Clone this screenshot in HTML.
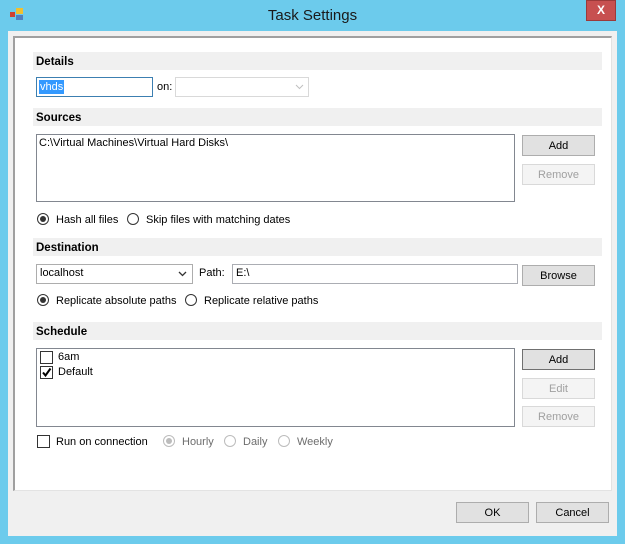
<!DOCTYPE html>
<html><head><style>
*{box-sizing:border-box;margin:0;padding:0}
body{width:625px;height:544px;background:#6ccbec;font-family:"Liberation Sans",sans-serif;font-size:11px;color:#000;position:relative;overflow:hidden}
.a{position:absolute}
.hdr{position:absolute;left:33px;width:569px;height:18px;background:#f0f0f0;font-weight:bold;font-size:11.5px;padding:4px 0 0 3px}
.btn{position:absolute;width:73px;height:21px;background:#e1e1e1;border:1px solid #adadad;text-align:center;line-height:20px}
.dis{background:#f4f4f4;border-color:#d9d9d9;color:#a0a0a0}
.box{position:absolute;background:#fff;border:1px solid #828790}
.rad{position:absolute;width:12px;height:12px;border:1px solid #333;border-radius:50%;background:#fff}
.rad.on::after{content:"";position:absolute;left:2px;top:2px;width:6px;height:6px;border-radius:50%;background:#333}
.rad.dr{border-color:#bcbcbc}
.rad.dr.on::after{background:#bcbcbc}
.chk{position:absolute;width:13px;height:13px;border:1px solid #333;background:#fff}
.t{position:absolute;white-space:nowrap}
</style></head><body>
<div class="a" style="left:10px;top:8px;width:14px;height:12px">
<div class="a" style="left:6px;top:0;width:7px;height:6px;background:#f0c030"></div>
<div class="a" style="left:0;top:4px;width:5px;height:5px;background:#d04030"></div>
<div class="a" style="left:6px;top:7px;width:7px;height:5px;background:#5080c0"></div>
</div>
<div class="t" style="left:0;width:625px;text-align:center;top:7px;font-size:15px;color:#1a1a1a">Task Settings</div>
<div class="a" style="left:586px;top:0;width:30px;height:21px;background:#c75050;border:1px solid #9b3a3a;color:#fff;font-weight:bold;font-size:12px;text-align:center;line-height:19px">X</div>
<div class="a" style="left:8px;top:31px;width:609px;height:505px;background:#f0f0f0"></div>
<div class="a" style="left:13px;top:36px;width:599px;height:455px;background:#fff;border-top:2px solid #a0a0a0;border-left:2px solid #a0a0a0;border-right:1px solid #e3e3e3;border-bottom:1px solid #e3e3e3"></div>

<div class="hdr" style="top:52px">Details</div>
<div class="box" style="left:36px;top:77px;width:117px;height:20px;border-color:#3c7fb1"></div>
<div class="t" style="left:39px;top:80px;background:#3399ff;color:#fff;padding:0 1px;line-height:14px">vhds</div>
<div class="t" style="left:157px;top:81px">on:</div>
<div class="box" style="left:175px;top:77px;width:134px;height:20px;border-color:#d9d9d9"></div>
<svg class="a" style="left:295px;top:84px" width="9" height="6"><path d="M1 1 L4.5 4.5 L8 1" stroke="#c0c0c0" fill="none"/></svg>

<div class="hdr" style="top:108px">Sources</div>
<div class="box" style="left:36px;top:134px;width:479px;height:68px"></div>
<div class="t" style="left:39px;top:137px">C:\Virtual Machines\Virtual Hard Disks\</div>
<div class="btn" style="left:522px;top:135px">Add</div>
<div class="btn dis" style="left:522px;top:164px">Remove</div>
<div class="rad on" style="left:37px;top:213px"></div><div class="t" style="left:56px;top:214px">Hash all files</div>
<div class="rad" style="left:127px;top:213px"></div><div class="t" style="left:146px;top:214px">Skip files with matching dates</div>

<div class="hdr" style="top:238px">Destination</div>
<div class="box" style="left:36px;top:264px;width:157px;height:20px;border-color:#adadad;background:#fff"></div>
<div class="t" style="left:40px;top:267px">localhost</div>
<svg class="a" style="left:178px;top:271px" width="9" height="6"><path d="M1 1 L4.5 4.5 L8 1" stroke="#333" stroke-width="1.3" fill="none"/></svg>
<div class="t" style="left:199px;top:267px">Path:</div>
<div class="box" style="left:232px;top:264px;width:286px;height:20px;border-color:#abadb3"></div>
<div class="t" style="left:236px;top:267px">E:\</div>
<div class="btn" style="left:522px;top:265px">Browse</div>
<div class="rad on" style="left:37px;top:294px"></div><div class="t" style="left:56px;top:295px">Replicate absolute paths</div>
<div class="rad" style="left:185px;top:294px"></div><div class="t" style="left:204px;top:295px">Replicate relative paths</div>

<div class="hdr" style="top:322px">Schedule</div>
<div class="box" style="left:36px;top:348px;width:479px;height:79px"></div>
<div class="chk" style="left:40px;top:351px"></div><div class="t" style="left:58px;top:351px">6am</div>
<div class="chk" style="left:40px;top:366px"><svg width="11" height="11" style="position:absolute;left:0;top:0"><path d="M2 5.5 L4.5 8.5 L9.5 1.5" stroke="#000" stroke-width="2" fill="none"/></svg></div><div class="t" style="left:58px;top:366px">Default</div>
<div class="btn" style="left:522px;top:349px;border-color:#707070">Add</div>
<div class="btn dis" style="left:522px;top:378px">Edit</div>
<div class="btn dis" style="left:522px;top:406px">Remove</div>
<div class="chk" style="left:37px;top:435px"></div><div class="t" style="left:56px;top:436px">Run on connection</div>
<div class="rad dr on" style="left:163px;top:435px"></div><div class="t" style="left:182px;top:436px;color:#6d6d6d">Hourly</div>
<div class="rad dr" style="left:224px;top:435px"></div><div class="t" style="left:243px;top:436px;color:#6d6d6d">Daily</div>
<div class="rad dr" style="left:278px;top:435px"></div><div class="t" style="left:297px;top:436px;color:#6d6d6d">Weekly</div>

<div class="btn" style="left:456px;top:502px;height:21px">OK</div>
<div class="btn" style="left:536px;top:502px;height:21px">Cancel</div>
</body></html>
